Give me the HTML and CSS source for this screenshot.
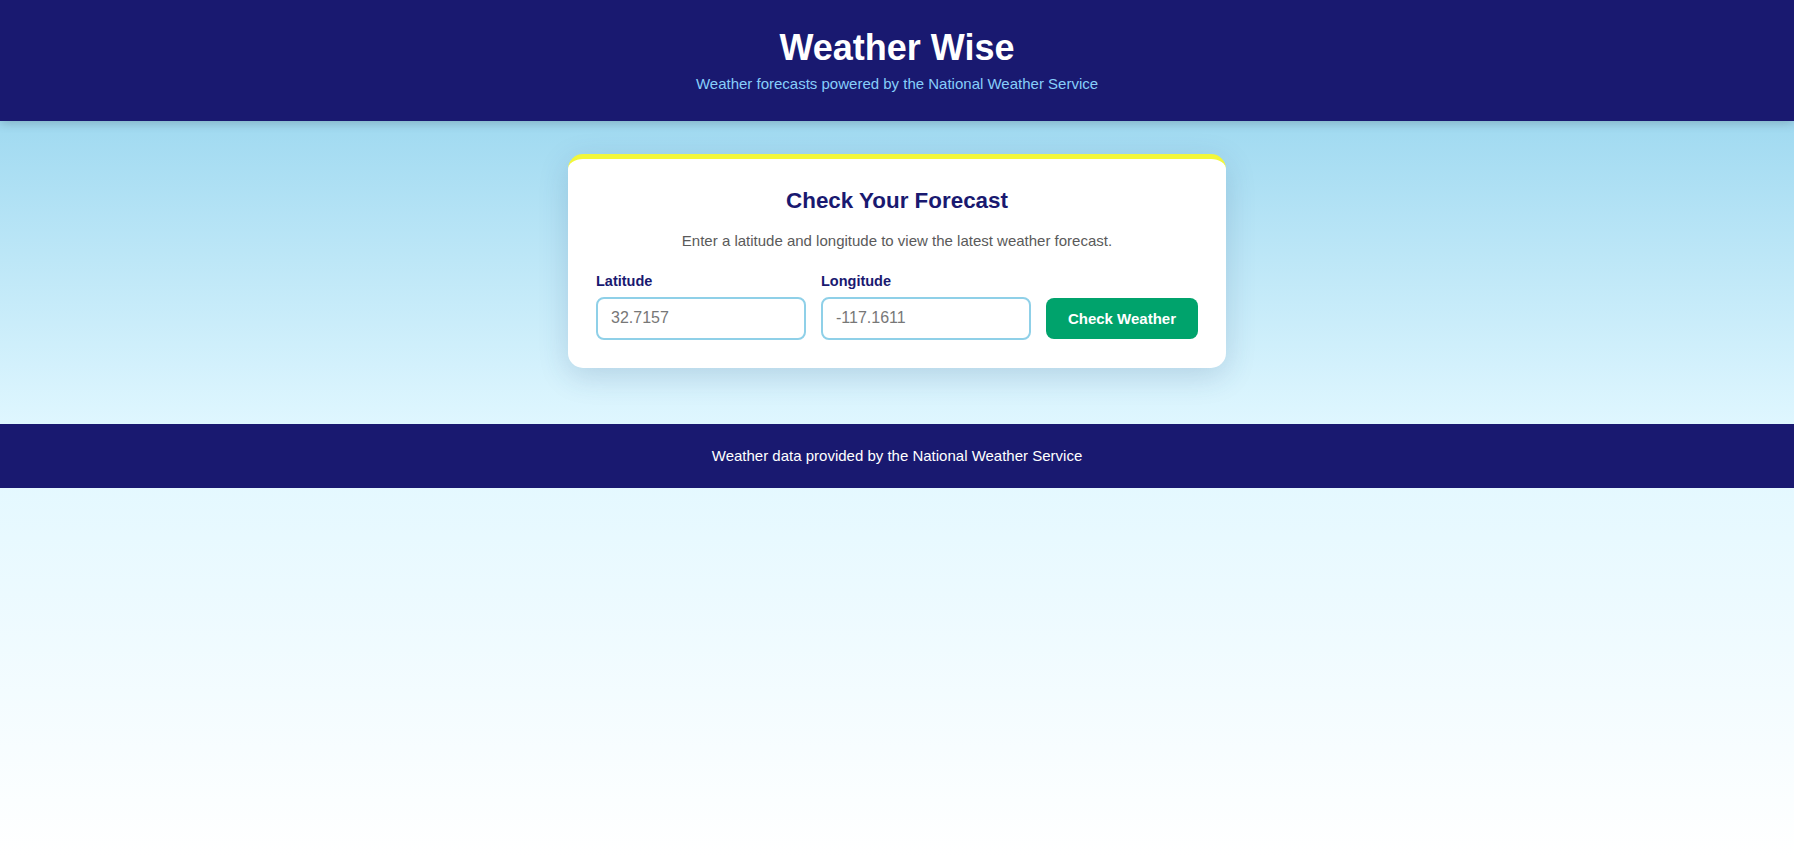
FILE: index.html
```html
<!DOCTYPE html>
<html lang="en">
<head>
<meta charset="utf-8">
<title>Weather Wise</title>
<link rel="stylesheet" href="styles.css">
</head>
<body>
<header class="site-header">
  <h1 class="site-title">Weather Wise</h1>
  <p class="site-subtitle">Weather forecasts powered by the National Weather Service</p>
</header>
<main class="main">
  <section class="card">
    <h2 class="card-title">Check Your Forecast</h2>
    <p class="card-desc">Enter a latitude and longitude to view the latest weather forecast.</p>
    <form class="form-row" onsubmit="return false;">
      <div class="field">
        <label class="field-label" for="lat">Latitude</label>
        <input class="field-input" id="lat" type="text" placeholder="32.7157">
      </div>
      <div class="field">
        <label class="field-label" for="lon">Longitude</label>
        <input class="field-input" id="lon" type="text" placeholder="-117.1611">
      </div>
      <button class="btn" type="submit">Check Weather</button>
    </form>
  </section>
</main>
<footer class="site-footer">
  <p class="footer-text">Weather data provided by the National Weather Service</p>
</footer>
</body>
</html>
```

FILE: styles.css
```css
* { box-sizing: border-box; }

html, body { margin: 0; padding: 0; }

body {
  min-height: 100vh;
  font-family: "Liberation Sans", Arial, Helvetica, sans-serif;
  background: linear-gradient(to bottom, #87ceeb, #e0f7ff, #ffffff);
  color: #333;
}

.site-header {
  background: #191970;
  color: #fff;
  text-align: center;
  padding: 27px 16px 28px;
  box-shadow: 0 2px 10px rgba(0, 0, 0, 0.2);
  position: relative;
  z-index: 1;
}

.site-title {
  margin: 0 0 7px;
  font-size: 36px;
  line-height: 1.15;
  font-weight: 700;
}

.site-subtitle {
  margin: 0;
  font-size: 15px;
  line-height: 1.2;
  color: #87cefa;
}

.main {
  padding: 33px 16px 56px;
}

.card {
  width: 658px;
  margin: 0 auto;
  background: #fff;
  border-top: 5px solid #f2f73a;
  border-radius: 15px;
  padding: 29px 28px 28px;
  box-shadow: 0 8px 30px rgba(40, 70, 120, 0.18);
  text-align: center;
}

.card-title {
  margin: 0 0 18px;
  font-size: 22.4px;
  line-height: 1.15;
  color: #191970;
  font-weight: 700;
}

.card-desc {
  margin: 0 0 24px;
  font-size: 15px;
  line-height: 1.15;
  color: #5a5a5a;
}

.form-row {
  display: flex;
  align-items: flex-end;
  gap: 15px;
  text-align: left;
}

.field {
  flex: 1;
  display: flex;
  flex-direction: column;
}

.field-label {
  display: block;
  margin-bottom: 7px;
  font-size: 14.5px;
  line-height: 1.15;
  font-weight: 700;
  color: #191970;
}

.field-input {
  width: 100%;
  height: 42.5px;
  padding: 10px 13px;
  border: 2px solid #8fd0e8;
  border-radius: 8px;
  font-family: inherit;
  font-size: 16px;
  color: #333;
  background: #fff;
  outline: none;
}

.field-input::placeholder { color: #777; }

.btn {
  height: 41.5px;
  padding: 0 22px;
  border: none;
  border-radius: 8px;
  background: #00a36c;
  color: #fff;
  font-family: inherit;
  font-size: 15px;
  font-weight: 700;
  cursor: pointer;
  margin-bottom: 0.5px;
}

.site-footer {
  background: #191970;
  color: #fff;
  text-align: center;
  padding: 23px 16px 24px;
}

.footer-text {
  margin: 0;
  font-size: 15px;
  line-height: 1.15;
}
```
